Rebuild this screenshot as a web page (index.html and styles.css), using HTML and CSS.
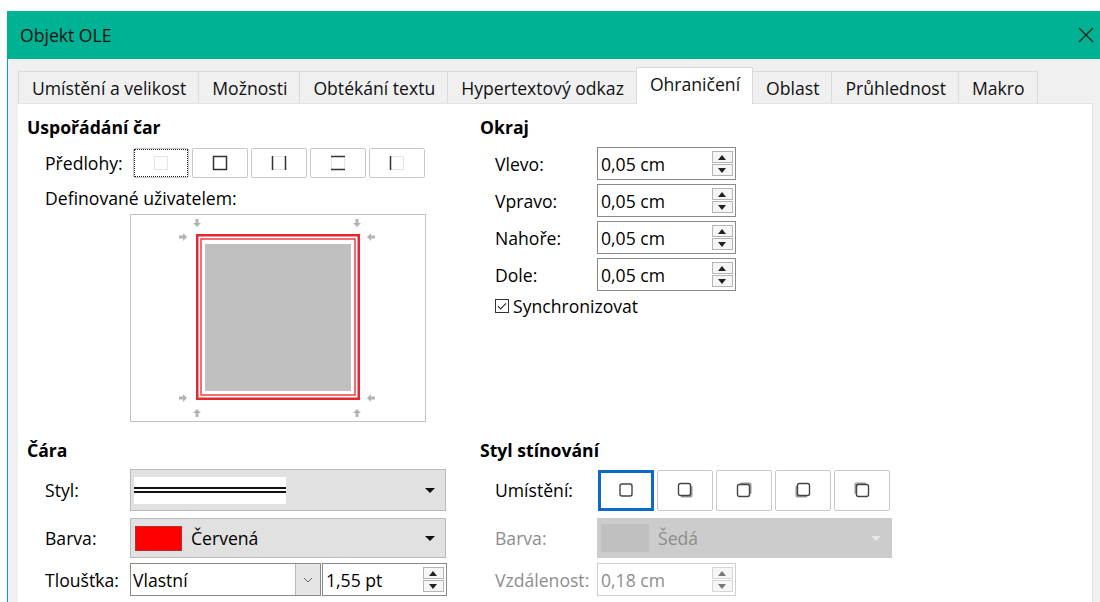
FILE: index.html
```html
<!DOCTYPE html>
<html lang="cs">
<head>
<meta charset="utf-8">
<title>Objekt OLE</title>
<link rel="stylesheet" href="styles.css">
</head>
<body>
<div class="window">
  <header class="titlebar">
    <span class="title">Objekt OLE</span>
    <svg class="close" width="16" height="16" viewBox="0 0 16 16"><path d="M1 1L15 15M15 1L1 15" stroke="#1a1a1a" stroke-width="1.2" fill="none"/></svg>
  </header>
  <div class="client">
    <nav class="tabs">
      <div class="tab">Umístění a velikost</div>
      <div class="tab">Možnosti</div>
      <div class="tab">Obtékání textu</div>
      <div class="tab">Hypertextový odkaz</div>
      <div class="tab active">Ohraničení</div>
      <div class="tab">Oblast</div>
      <div class="tab">Průhlednost</div>
      <div class="tab">Makro</div>
    </nav>
    <main class="panel">
      <section class="sec lines">
        <h2 class="head">Uspořádání čar</h2>
        <div class="row presets">
          <span class="lbl lbl-presets">Předlohy:</span>
          <div class="btns">
            <button class="pbtn focus"><svg width="16" height="16" viewBox="0 0 16 16"><rect x="1.5" y="1.5" width="13" height="13" fill="none" stroke="#c8c8c8" stroke-dasharray="1 1"/></svg></button>
            <button class="pbtn"><svg width="16" height="16" viewBox="0 0 16 16"><rect x="1.5" y="1.5" width="13" height="13" fill="none" stroke="#333" stroke-width="1.5"/></svg></button>
            <button class="pbtn"><svg width="16" height="16" viewBox="0 0 16 16"><path d="M1.5 1.5H14.5M1.5 14.5H14.5" stroke="#c8c8c8" stroke-dasharray="1 1"/><path d="M1.5 1V15M14.5 1V15" stroke="#333" stroke-width="1.5"/></svg></button>
            <button class="pbtn"><svg width="16" height="16" viewBox="0 0 16 16"><path d="M1.5 1.5V14.5M14.5 1.5V14.5" stroke="#c8c8c8" stroke-dasharray="1 1"/><path d="M1 1.5H15M1 14.5H15" stroke="#333" stroke-width="1.5"/></svg></button>
            <button class="pbtn"><svg width="16" height="16" viewBox="0 0 16 16"><path d="M1.5 1.5H14.5V14.5H1.5" fill="none" stroke="#c8c8c8" stroke-dasharray="1 1"/><path d="M1.5 1V15" stroke="#333" stroke-width="1.5"/></svg></button>
          </div>
        </div>
        <div class="row userdef"><span class="lbl">Definované uživatelem:</span></div>
        <div class="preview">
          <svg width="296" height="208" viewBox="0 0 296 208">
            <g fill="#b4b4b4">
              <!-- down arrows above the frame -->
              <path d="M65.5 5h3v4h2.5l-4 4-4-4h2.5z"/>
              <path d="M225.5 5h3v4h2.5l-4 4-4-4h2.5z"/>
              <!-- right arrows left of the frame -->
              <path d="M49 21.5v3h4v2.5l4-4-4-4v2.5z"/>
              <path d="M49 182.5v3h4v2.5l4-4-4-4v2.5z"/>
              <!-- left arrows right of the frame -->
              <path d="M245 21.5v3h-4v2.5l-4-4 4-4v2.5z"/>
              <path d="M245 182.5v3h-4v2.5l-4-4 4-4v2.5z"/>
              <!-- up arrows below the frame -->
              <path d="M65.5 203h3v-4h2.5l-4-4-4 4h2.5z"/>
              <path d="M225.5 203h3v-4h2.5l-4-4-4 4h2.5z"/>
            </g>
            <rect x="67.25" y="21.25" width="161.5" height="163.5" fill="none" stroke="#e8262b" stroke-width="2.5"/>
            <rect x="71" y="25" width="154" height="156" fill="none" stroke="#e8262b" stroke-width="1.3"/>
            <rect x="75" y="30" width="146" height="147" fill="#c0c0c0"/>
          </svg>
        </div>
      </section>

      <section class="sec margins">
        <h2 class="head">Okraj</h2>
        <div class="frow"><span class="lbl lbl-m">Vlevo:</span><div class="spin"><span class="val">0,05 cm</span><span class="arrows"><i class="up"></i><i class="dn"></i></span></div></div>
        <div class="frow"><span class="lbl lbl-m">Vpravo:</span><div class="spin"><span class="val">0,05 cm</span><span class="arrows"><i class="up"></i><i class="dn"></i></span></div></div>
        <div class="frow"><span class="lbl lbl-m">Nahoře:</span><div class="spin"><span class="val">0,05 cm</span><span class="arrows"><i class="up"></i><i class="dn"></i></span></div></div>
        <div class="frow"><span class="lbl lbl-m">Dole:</span><div class="spin"><span class="val">0,05 cm</span><span class="arrows"><i class="up"></i><i class="dn"></i></span></div></div>
        <label class="check"><svg width="14" height="14" viewBox="0 0 14 14"><rect x="0.5" y="0.5" width="13" height="13" fill="#fff" stroke="#333"/><path d="M3 7.2l2.6 2.6L11 4.4" fill="none" stroke="#333" stroke-width="1.2"/></svg>Synchronizovat</label>
      </section>

      <section class="sec line">
        <h2 class="head">Čára</h2>
        <div class="frow r-style"><span class="lbl lbl-l">Styl:</span>
          <div class="drop">
            <span class="linesample"><i class="l1"></i><i class="l2"></i></span>
            <span class="tri"></span>
          </div>
        </div>
        <div class="frow r-color"><span class="lbl lbl-l">Barva:</span>
          <div class="drop">
            <span class="swatch red"></span><span class="dtext">Červená</span>
            <span class="tri"></span>
          </div>
        </div>
        <div class="frow r-width"><span class="lbl lbl-l">Tloušťka:</span>
          <div class="combo"><span class="val">Vlastní</span><span class="cbtn"><svg width="10" height="6" viewBox="0 0 10 6"><path d="M1 1l4 4 4-4" fill="none" stroke="#666" stroke-width="1"/></svg></span></div>
          <div class="spin spin-w"><span class="val">1,55 pt</span><span class="arrows"><i class="up"></i><i class="dn"></i></span></div>
        </div>
      </section>

      <section class="sec shadow">
        <h2 class="head">Styl stínování</h2>
        <div class="frow r-style"><span class="lbl lbl-m">Umístění:</span>
          <div class="btns sbtns">
            <button class="sbtn sel"><svg width="16" height="16" viewBox="0 0 16 16"><rect x="2" y="2" width="12" height="12" rx="2" fill="#fff" stroke="#444" stroke-width="1.4"/></svg></button>
            <button class="sbtn"><svg width="16" height="16" viewBox="0 0 16 16"><rect x="3.5" y="3.5" width="12" height="12" rx="2" fill="#9a9a9a"/><rect x="1.5" y="1.5" width="12" height="12" rx="2" fill="#fff" stroke="#444" stroke-width="1.4"/></svg></button>
            <button class="sbtn"><svg width="16" height="16" viewBox="0 0 16 16"><rect x="3.5" y="0.5" width="12" height="12" rx="2" fill="#9a9a9a"/><rect x="1.5" y="2.5" width="12" height="12" rx="2" fill="#fff" stroke="#444" stroke-width="1.4"/></svg></button>
            <button class="sbtn"><svg width="16" height="16" viewBox="0 0 16 16"><rect x="0.5" y="3.5" width="12" height="12" rx="2" fill="#9a9a9a"/><rect x="2.5" y="1.5" width="12" height="12" rx="2" fill="#fff" stroke="#444" stroke-width="1.4"/></svg></button>
            <button class="sbtn"><svg width="16" height="16" viewBox="0 0 16 16"><rect x="0.5" y="0.5" width="12" height="12" rx="2" fill="#9a9a9a"/><rect x="2.5" y="2.5" width="12" height="12" rx="2" fill="#fff" stroke="#444" stroke-width="1.4"/></svg></button>
          </div>
        </div>
        <div class="frow r-color dis"><span class="lbl lbl-m">Barva:</span>
          <div class="drop drop-dis">
            <span class="swatch grey"></span><span class="dtext">Šedá</span>
            <span class="tri"></span>
          </div>
        </div>
        <div class="frow r-width dis"><span class="lbl lbl-m">Vzdálenost:</span>
          <div class="spin spin-dis"><span class="val">0,18 cm</span><span class="arrows"><i class="up"></i><i class="dn"></i></span></div>
        </div>
      </section>
    </main>
  </div>
</div>
</body>
</html>
```

FILE: styles.css
```css
* { box-sizing: border-box; }

body {
  margin: 0;
  background: #fff;
  font-family: "Open Sans", "Noto Sans", sans-serif;
  font-size: 17.6px;
  color: #000;
  overflow: hidden;
}

.window {
  margin: 11px 0 0 7px;
  height: 591px;
  display: flex;
  flex-direction: column;
  border-left: 1px solid #00b294;
}

.titlebar {
  height: 48px;
  flex: none;
  background: #00b294;
  display: flex;
  align-items: center;
  padding: 0 6px 0 12px;
}
.title { font-size: 17.6px; color: #111; }
.close { margin-left: auto; }

.client {
  flex: 1;
  background: #f0f0f0;
  padding: 12px 7px 0 10px;
  display: flex;
  flex-direction: column;
}

/* tab strip */
.tabs {
  display: flex;
  height: 32px;
  flex: none;
  align-items: flex-end;
}
.tab {
  height: 32px;
  padding: 0 12px 0 13px;
  border: 1px solid #dadada;
  border-bottom: none;
  margin-right: -1px;
  background: #f0f0f0;
  display: flex;
  align-items: center;
  color: #111;
  white-space: nowrap;
}
.tab.active {
  height: 37px;
  background: #fff;
  position: relative;
  z-index: 1;
  margin-bottom: -1px;
  padding-bottom: 4px;
}

/* page content */
.panel {
  flex: 1;
  background: #fff;
  border-top: 1px solid #e4e4e4;
  border-right: 1px solid #e4e4e4;
  display: grid;
  grid-template-columns: 453px 1fr;
  grid-template-rows: 323px 1fr;
  padding: 11px 0 0 9px;
}

.sec { display: flex; flex-direction: column; }

.head {
  margin: 0;
  font-size: 17.6px;
  font-weight: 700;
  line-height: 24px;
  height: 24px;
}

.lbl { white-space: nowrap; }

.row { display: flex; align-items: center; padding-left: 18px; }

.presets { margin-top: 9px; height: 30px; }
.lbl-presets { width: 88px; }

.btns { display: flex; gap: 3px; }
.pbtn {
  width: 56px;
  height: 30px;
  padding: 0;
  background: #fff;
  border: 1px solid #c9c9c9;
  border-radius: 2px;
  display: flex;
  align-items: center;
  justify-content: center;
}
.pbtn.focus { outline: 1px dotted #222; outline-offset: -2px; }

.userdef { margin-top: 8px; height: 24px; }

.preview {
  margin: 4px 0 0 103px;
  width: 296px;
  height: 208px;
  border: 1px solid #c2c2c2;
  position: relative;
}
.preview svg { position: absolute; left: -1px; top: -1px; }

/* form rows */
.frow { display: flex; align-items: center; padding-left: 15px; }
.margins .frow { margin-top: 4px; height: 33px; }
.margins .head + .frow { margin-top: 8px; }
.lbl-m { width: 102px; }
.lbl-l { width: 88px; padding-left: 3px; }

.spin {
  width: 139px;
  height: 33px;
  border: 1px solid #8a8a8a;
  background: #fff;
  display: flex;
  align-items: center;
  padding: 0 2px 0 3px;
}
.spin .val { flex: 1; }
.arrows {
  display: flex;
  flex-direction: column;
  gap: 1px;
  width: 21px;
}
.arrows i {
  height: 12px;
  border: 1px solid #b5b5b5;
  background: #f6f6f6;
  position: relative;
}
.arrows i::after {
  content: "";
  position: absolute;
  left: 5px;
  border-left: 4.5px solid transparent;
  border-right: 4.5px solid transparent;
}
.arrows .up::after { top: 3px; border-bottom: 5px solid #222; }
.arrows .dn::after { top: 3px; border-top: 5px solid #222; }

.check {
  display: flex;
  align-items: center;
  gap: 4px;
  padding-left: 15px;
  margin-top: 3px;
  height: 24px;
}

/* bottom sections */
.r-style { margin-top: 7px; height: 42px; }
.r-color { margin-top: 7px; height: 40px; }
.r-width { margin-top: 5px; height: 33px; }

.drop {
  width: 316px;
  height: 100%;
  background: #e1e1e1;
  border: 1px solid #b9b9b9;
  display: flex;
  align-items: center;
  padding: 0 10px 0 3px;
}
.shadow .drop { width: 295px; }
.tri {
  margin-left: auto;
  width: 0; height: 0;
  border-left: 5px solid transparent;
  border-right: 5px solid transparent;
  border-top: 5px solid #111;
}
.linesample {
  width: 152px;
  height: 27px;
  background: #fff;
  display: flex;
  flex-direction: column;
  justify-content: center;
  gap: 2px;
}
.linesample i { display: block; background: #111; }
.linesample .l1 { height: 2px; }
.linesample .l2 { height: 2px; }

.swatch {
  width: 47px;
  height: 25px;
  margin-left: 1px;
  border: 1px solid #a33;
}
.swatch.red { background: #ff0000; }
.dtext { margin-left: 9px; }

.combo {
  width: 191px;
  height: 33px;
  border: 1px solid #8a8a8a;
  background: #fff;
  display: flex;
  align-items: center;
  padding-left: 2px;
}
.combo .val { flex: 1; }
.cbtn {
  width: 25px;
  height: 100%;
  background: #e5e5e5;
  border-left: 1px solid #b9b9b9;
  display: flex;
  align-items: center;
  justify-content: center;
}
.spin-w { width: 125px; margin-left: 1px; }

.sbtns { gap: 3px; margin-left: 1px; }
.sbtn {
  width: 56px;
  height: 41px;
  padding: 0;
  background: #fff;
  border: 1px solid #c9c9c9;
  border-radius: 2px;
  display: flex;
  align-items: center;
  justify-content: center;
}
.sbtn.sel { border: 3px solid #0b69c7; border-radius: 0; }

.dis { color: #8d8d8d; }
.drop-dis { background: #cccccc; border-color: #cccccc; }
.drop-dis .tri { border-top-color: #e8e8e8; }
.swatch.grey { background: #c0c0c0; border: none; margin-left: 0; width: 48px; height: 28px; }
.drop-dis .dtext { color: #8d8d8d; }
.spin-dis { border-color: #cfcfcf; }
.spin-dis .arrows i { border-color: #d6d6d6; }
.spin-dis .arrows .up::after { border-bottom-color: #777; }
.spin-dis .arrows .dn::after { border-top-color: #777; }
```
